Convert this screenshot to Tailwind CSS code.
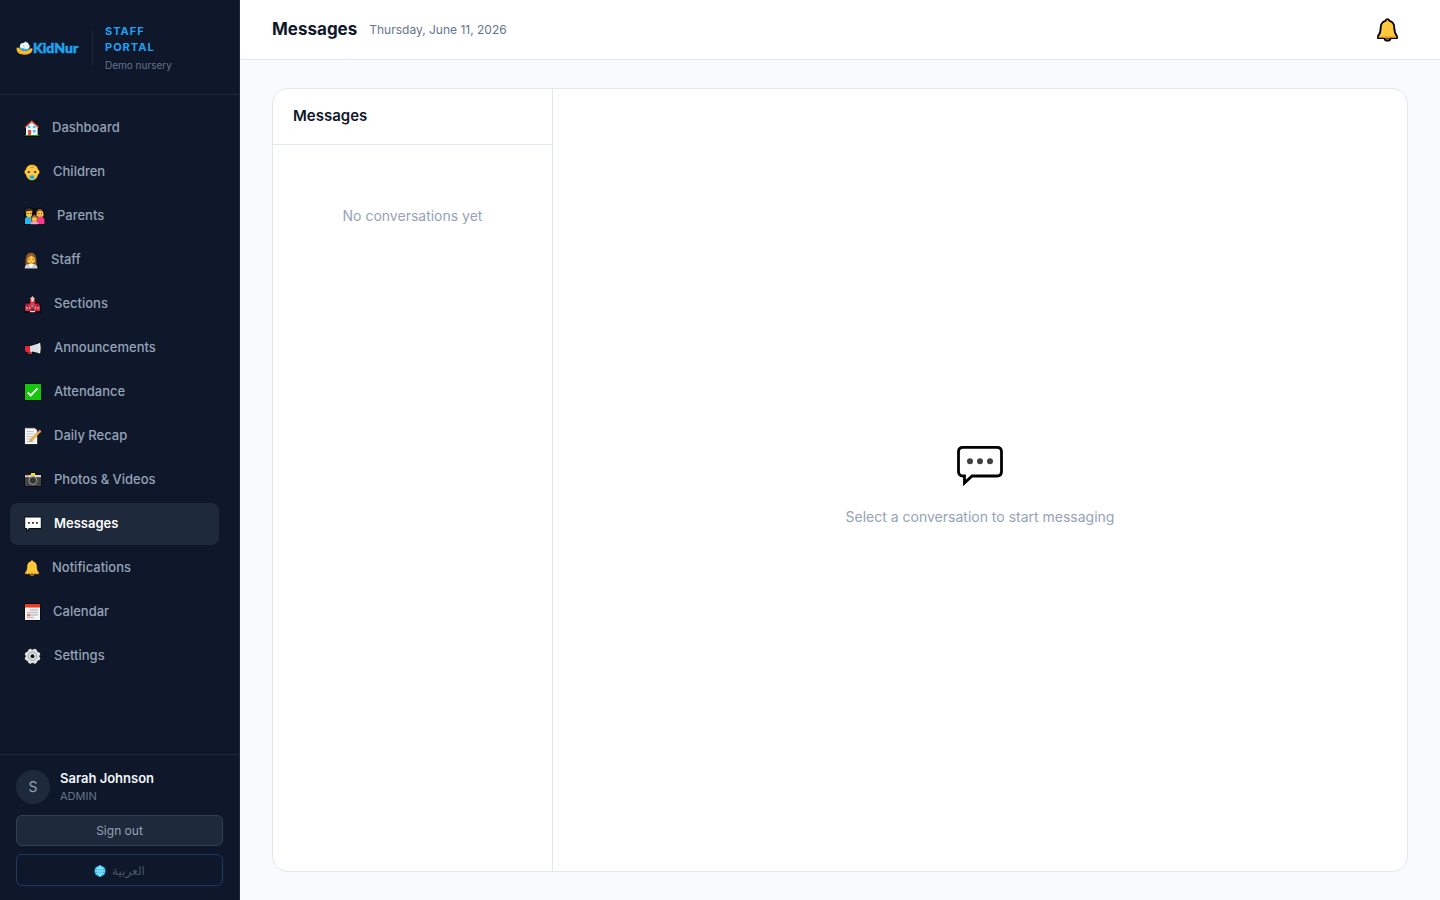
<!DOCTYPE html>
<html lang="en">
<head>
<meta charset="utf-8">
<meta name="viewport" content="width=device-width, initial-scale=1">
<title>Messages – KidNur Staff Portal</title>
<script src="https://cdn.jsdelivr.net/npm/@tailwindcss/browser@4"></script>
</head>
<body class="flex h-screen bg-[#f8fafc] font-['Inter','Noto_Sans',sans-serif] text-[#0f172a]">
<svg class="hidden" aria-hidden="true">
  <symbol id="bell" viewBox="0 0 22 24">
    <path d="M11 1.2C9.8 1.2 9.2 2 9.1 2.9 5.7 3.8 4.2 6.400 4.2 9.8c0 4-.9 6.400-2.700 8.300v2.100h6.400c.4 1.700 1.500 2.500 3.100 2.500s2.700-.8 3.100-2.500h6.400v-2.100c-1.800-1.900-2.700-4.300-2.700-8.300 0-3.400-1.500-6-4.900-6.900-.1-.9-.7-1.700-1.900-1.700z" fill="#ffc83d" stroke="#000" stroke-linejoin="round"/>
    <path d="M2.200 18.200h17.600v1.500H2.200z" fill="#f0a828"/>
    <path d="M8.700 19.700h4.600c0 1.400-1 2.100-2.300 2.100s-2.300-.7-2.300-2.100z" fill="#8b4a20"/>
  </symbol>
</svg>

<aside class="flex w-60 shrink-0 flex-col border-r border-[#1e293b] bg-[#0f172a]">
  <div class="flex h-[95px] items-center border-b border-[#1e293b] px-4 pt-0.5">
    <div class="flex w-[76px] items-center">
      <svg class="h-4 w-[17px] shrink-0" viewBox="0 0 17 16" aria-hidden="true">
        <path d="M.5 8.500C.5 13 4 14.700 8.700 14.700s7.800-2 7.800-5.600c0-1.200-1.900-1.100-3 .1-2.500 2.200-7.200 2-9.800-.7C2.700 7.300.7 7.200.5 8.500z" fill="#fcb827"/>
        <path d="M3 7.500c1.500 4 8 4.600 10.700 1.500l-1-3-5 .5z" fill="#2aa9e8"/>
        <path d="M4 7C3.300 4.500 5.500 2.400 7.500 3.100 9 .8 12.800 2.200 12.700 4.400c1.600 1 1.200 3.900-.7 4-1.600 1.400-3.600.5-4.100-.4-1.400.9-3.400.4-3.900-1z" fill="#f2f5e9"/>
        <path d="M9 1.600l2 1.200M7 5.600l1.500.8" stroke="#65c4ee"/>
      </svg>
      <span class="font-[Lato] text-[14px] leading-4 font-black text-[#1ea5ee] [-webkit-text-stroke:0.5px_#1ea5ee]">KidNur</span>
    </div>
    <div class="h-9 w-px shrink-0 bg-[#1e293b]"></div>
    <div class="ml-3 w-20">
      <p class="text-[11px] leading-4 font-bold tracking-[1px] text-[#1da1f2]">STAFF PORTAL</p>
      <p class="mt-[3px] text-[10px] leading-[15px] text-[#64748b]">Demo nursery</p>
    </div>
  </div>

  <nav class="flex flex-1 flex-col gap-0.5 py-3 pr-5 pl-2.5 text-[13px] font-medium text-[#94a3b8] *:flex *:h-[42px] *:shrink-0 *:items-center *:gap-2.5 *:rounded-lg *:px-3.5">
    <a href="#dashboard"><svg class="h-[18px] w-[18px]" viewBox="0 0 18 18"><path d="M0 8.500 7.800.8l2.500 2V2h3v3.500L15.800 9l-1 .8V16H16v2H0v-2h1.200V9.500z" fill="#080b12"/><path d="M2 8.200 7.800 3l5.900 5.200V16H2z" fill="#f0f1f4"/><path d="m1 8.500 6.800-6.400 6.900 6.400" fill="none" stroke="#ef4b35" stroke-width="1.300"/><path d="M4 11h3v5H4z" fill="#e94a35"/><path d="M4 7h2.300v2H4zM9 7h2.500v2H9zM9 11h2.500v2.500H9z" fill="#36c5f4"/><path d="M.8 16h14.400v1H.8z" fill="#198a32"/></svg>Dashboard</a>
    <a href="#children"><svg class="h-[18px] w-[19px]" viewBox="0 0 19 18"><path d="M8 1.400c3.800 0 6 2.300 6.400 5.400 1.900.5 1.900 4 0 4.500-.9 3.900-3.200 6.300-6.400 6.300s-5.500-2.400-6.400-6.300c-1.900-.5-1.900-4 0-4.500C2 3.700 4.200 1.400 8 1.400z" fill="#ffc83d" stroke="#080b12" stroke-width=".6"/><path d="M6.500 4q3 1 3.500-1.200" fill="none" stroke="#d98b20" stroke-width="1.100"/><circle cx="4.800" cy="9" r="1.100" fill="#34251d"/><circle cx="11.200" cy="9" r="1.100" fill="#34251d"/><rect x="5.400" y="12.200" width="5.200" height="3.700" rx="1.600" fill="#29bdf2"/><circle cx="8" cy="14" r=".8" fill="#1c79b7"/></svg>Children</a>
    <a href="#parents"><svg class="h-[18px] w-[23px]" viewBox="0 0 23 18"><path d="M0 3C2-.5 8-.5 10.500 2 14-1 20 0 20.500 5v5q1 1 1 2v6H0z" fill="#080b12"/><path d="M1 4.500C.8.800 8.500-.2 9.300 4.500L8 7H2z" fill="#49301f"/><path d="M12 9.500C11-.5 20.500-.5 20 9.500z" fill="#9b5732"/><path d="M2.200 4.500 7.800 3.800V9L5.300 11 2.200 9z" fill="#ffc83d"/><path d="m13.200 5 3-1.500L19 5.200V9l-2.800 2-3-2z" fill="#ffc83d"/><path d="M1 17v-5q0-2 2-2h4.500V17z" fill="#22b8e9"/><path d="M13 10h5.500q2 1 2 2.500V17H13z" fill="#f33b91"/><path d="M7 12.500c-.2-6 7.200-6 7 0v2.500H7z" fill="#9b5732"/><path d="M8 11.500l2.500-2 2.500 2v2l-2.500 1.700L8 13.500z" fill="#f8bd48"/><path d="M6.500 17.200q0-2.700 2.500-2.700h3q2.400 0 2.400 2.700z" fill="#f6a1cf"/><path d="M3.500 6.500h1M6 6.500h1M14.400 6.500h1M17 6.500h1" stroke="#402b20"/><path d="M15.300 9h2" stroke="#e14a35"/></svg>Parents</a>
    <a href="#staff"><svg class="h-[18px] w-[17px]" viewBox="0 0 17 18"><path d="M1.500 13C1 4.500 2.200.7 7 .7s6 3.800 5.500 12.300L14 14.500V18H.2v-3.500z" fill="#080b12"/><path d="M1.500 14C1 5 3 1.500 7 1.500S13 5 12.500 14z" fill="#8f5835"/><path d="M3.500 7.500 7.500 4.500l3.300 3V11L7.200 13.500 3.500 11z" fill="#ffc83d"/><path d="M.7 17.400q0-3.800 2.700-4.200h7.400q2.700.5 2.700 4.200z" fill="#cfd1d5"/><path d="m4.500 13 2.500 4.300L9.700 13z" fill="#fff"/><path d="M4.700 8.300h1M8.700 8.300h1" stroke="#402b20"/><path d="M6.200 11.200h2" stroke="#d35b2b" stroke-width=".8"/></svg>Staff</a>
    <a href="#sections"><svg class="h-[18px] w-5" viewBox="0 0 20 18"><path d="M5.500 4 8.500.3 11.500 4v3.500H16v3h1.300V18H0v-7.500h1v-3h4.500z" fill="#080b12"/><path d="M1 10.500h15V16H1z" fill="#e32736"/><path d="M1.500 8.500h14v2.200h-14z" fill="#b51d2c"/><path d="m4 10.500 4.500-3.500 4.500 3.500V16H4z" fill="#f02a37"/><path d="M6.200 4h4.600v4.500H6.200z" fill="#f03746"/><path d="m5.800 4 2.700-3 2.700 3z" fill="#f5b9ba"/><circle cx="8.500" cy="5.300" r="1.200" fill="#fff"/><path d="M2 12h1.700v2H2zM5 12h1.300v2H5zM10.700 12H12v2h-1.300zM13.500 12H15v2h-1.500z" fill="#4ec5ef"/><circle cx="8.500" cy="10.700" r="1.200" fill="#2fa8db"/><path d="M7.300 13h2.500v3H7.300z" fill="#931a25"/><path d="M6 16h5v1.200H6z" fill="#e5e7eb"/></svg>Sections</a>
    <a href="#announcements"><svg class="h-[18px] w-5" viewBox="0 0 20 18"><path d="M1.500 6.500h5l10-3.200V15L8 13v2.500H4.300l-.6-2.600H1.500Q.3 9.500 1.500 6.500z" fill="#dedfe2" stroke="#080b12" stroke-linejoin="round"/><path d="M1.500 6.900H6v5.800H1.500Q.6 9.500 1.500 6.900z" fill="#ee2535"/><path d="M4 12.500h2.800v2.600H4.500z" fill="#c31526"/><path d="M15.700 4q1 5.300 0 10.400" fill="none" stroke="#fff"/></svg>Announcements</a>
    <a href="#attendance"><svg class="h-[18px] w-5" viewBox="0 0 20 18"><path d="M.5.500h17v17H.5z" fill="#16c60c" stroke="#080b12"/><path d="m3.800 9.500 3 2.900 6.700-7" fill="none" stroke="#fff" stroke-width="1.800"/></svg>Attendance</a>
    <a href="#recap"><svg class="h-[18px] w-5" viewBox="0 0 20 18"><path d="M.5.800H11l2.700 2.500v14.200H.5z" fill="#f5f5f5" stroke="#080b12" stroke-width=".8"/><path d="M2.500 4.500h7M2.500 7h7.800M2.500 9.500h6M2.500 12h5M2.500 14.500h7" stroke="#b4b7bb" stroke-width=".8"/><path d="m5.500 14.700 1-2.500 8.700-8.700 1.500 1.500-8.500 8.700z" fill="#f9b632" stroke="#6e511e" stroke-width=".3"/><path d="m14.400 4.300 1.400-1.500 1.500 1.500-1.200 1.400z" fill="#ee947a"/></svg>Daily Recap</a>
    <a href="#photos"><svg class="h-[18px] w-5" viewBox="0 0 20 18"><path d="M.5 3.500h5L7 1.500h4l1.500 2h5v12H.5z" fill="#454545" stroke="#080b12"/><path d="M1 4h16v2.200H1z" fill="#d5d5d5"/><path d="M7 2h4v3.200H7z" fill="#f6df21"/><path d="M2 3.700h2.300v1.500H2z" fill="#ed6154"/><circle cx="8.900" cy="9.500" r="3.900" fill="#343434" stroke="#aaa" stroke-width=".9"/></svg>Photos &amp; Videos</a>
    <a href="#messages" aria-current="page" class="bg-[#1e293b] font-semibold text-white"><svg class="h-[18px] w-5" viewBox="0 0 20 18"><path d="M.5 1.500h17v12.500H5.500L2.500 17.500V14H.5z" fill="#080b12"/><path d="M1.200 2.500h15.600V13H4.900l-1.700 2v-2h-2z" fill="#fff"/><path d="M4 7h1.900v1.800H4zM8 7h1.900v1.800H8zM12 7h1.900v1.800H12z" fill="#363636"/></svg>Messages</a>
    <a href="#notifications"><svg class="h-[18px] w-[18px]" viewBox="0 0 18 18"><use href="#bell" x="-.5" y="0" width="17" height="18" stroke-width=".8"/></svg>Notifications</a>
    <a href="#calendar"><svg class="h-[18px] w-[19px]" viewBox="0 0 19 18"><path d="M.5.500h16v17H.5z" fill="#f3f3f3" stroke="#080b12"/><path d="M1 1h15v3.500H1z" fill="#ed3b22"/><path d="M6 7h8M3 9.500h11M3 12h11M3 14.500h7" stroke="#b0b2b5" stroke-width="1.400" stroke-dasharray="1.500 .6"/><path d="M3.500 11h2.500v2.300H3.500z" fill="#f06b50"/></svg>Calendar</a>
    <a href="#settings"><svg class="h-[18px] w-5" viewBox="0 0 20 18"><path d="m6.300 1.300 2.200 1 2.200-1 2.200.9.800 2.200 2.200.8.900 2-1.100 2 1.100 2-.9 2.200-2.200.8-.8 2.200-2.200.9-2.200-1-2.200 1-2.200-.9-.8-2.200-2.200-.8-.8-2.200 1.100-2-1.100-2 .8-2 2.200-.8.800-2.200z" fill="#dfe0e2" stroke="#080b12" stroke-width=".9"/><circle cx="8.500" cy="9.200" r="4.200" fill="none" stroke="#9ca0a5" stroke-width="1"/><circle cx="8.500" cy="9.200" r="1.900" fill="#0a0d14"/></svg>Settings</a>
  </nav>

  <div class="border-t border-[#1e293b] px-4 py-3.5">
    <div class="flex items-center gap-2.5">
      <div class="flex size-[34px] items-center justify-center rounded-full bg-[#1e293b] text-sm text-[#94a3b8]">S</div>
      <div>
        <p class="text-[13px] leading-[18px] font-semibold text-[#f1f5f9]">Sarah Johnson</p>
        <p class="text-[11px] leading-[18px] text-[#64748b]">ADMIN</p>
      </div>
    </div>
    <button type="button" class="mt-2.5 block h-[31px] w-full max-w-[207px] rounded-md border border-[#334155] bg-[#1e293b] text-xs text-[#94a3b8]">Sign out</button>
    <button type="button" class="mt-2 flex h-8 w-full max-w-[207px] items-center justify-center gap-1.5 rounded-md border border-[#1e3a5f] pt-0.5 text-xs text-[#475569]">
      <svg class="size-3" viewBox="0 0 12 12" aria-hidden="true"><circle cx="6" cy="6" r="5.500" fill="#16b9ee"/><path d="M6 .5v11M.5 6h11M1.500 3.200h9M1.500 8.800h9M6 .5q-5 5.500 0 11M6 .5q5 5.500 0 11" fill="none" stroke="#c7f4ff" stroke-width=".7"/></svg>
      <span lang="ar" dir="rtl" class="font-['DejaVu_Sans',sans-serif]">العربية</span>
    </button>
  </div>
</aside>

<div class="flex min-w-0 flex-1 flex-col">
  <header class="flex h-[60px] shrink-0 items-center justify-between border-b border-[#e2e8f0] bg-white px-8">
    <div class="flex items-center gap-3">
      <h1 class="text-[17px] font-bold">Messages</h1>
      <span class="text-xs text-[#64748b]">Thursday, June 11, 2026</span>
    </div>
    <button type="button" aria-label="Notifications" class="mr-2"><svg class="h-6 w-[25px]"><use href="#bell" width="25" height="24" stroke-width="1.800"/></svg></button>
  </header>
  <main class="flex min-h-0 flex-1 px-8 py-7">
    <div class="flex min-w-0 flex-1 overflow-hidden rounded-2xl border border-[#e2e8f0] bg-white">
      <section class="w-[280px] shrink-0 border-r border-[#e2e8f0]">
        <h2 class="flex h-14 items-center border-b border-[#e2e8f0] px-5 text-[15px] font-semibold">Messages</h2>
        <p class="pt-[61px] text-center text-sm text-[#94a3b8]">No conversations yet</p>
      </section>
      <section class="flex flex-1 flex-col items-center justify-center gap-[13px] text-[#94a3b8]">
        <svg class="h-[60px] w-12" viewBox="0 0 48 60" aria-hidden="true"><path d="M7 13.300h34q4.500 0 4.500 4.500v19.700Q45.500 42 41 42H16l-7.500 7V42H7q-4.500 0-4.500-4.500V17.800Q2.500 13.300 7 13.300z" fill="#fff" stroke="#000" stroke-width="2.800"/><g fill="#404040"><circle cx="14" cy="27.300" r="3"/><circle cx="24" cy="27.300" r="3"/><circle cx="34" cy="27.300" r="3"/></g></svg>
        <p class="text-sm">Select a conversation to start messaging</p>
      </section>
    </div>
  </main>
</div>
</body>
</html>
